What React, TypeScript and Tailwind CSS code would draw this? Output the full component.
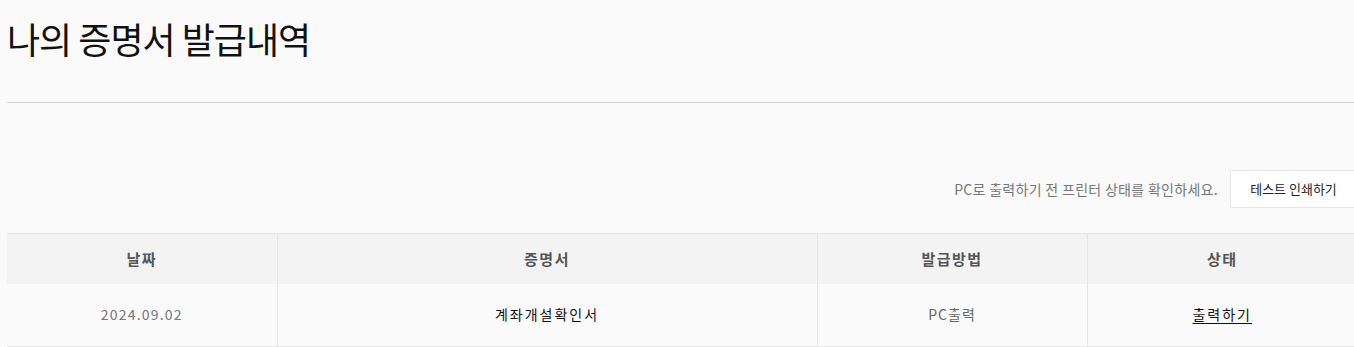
export default function App() {
  const font = { fontFamily: '"Noto Sans CJK KR", "Noto Sans", sans-serif' };
  return (
    <div className="min-h-[347px] w-full overflow-hidden bg-[#fafafa]" style={font}>
      <div className="ml-[7px] w-[1350px]">
        <h1 className="pt-[12px] text-[36px] leading-[52px] font-normal tracking-[-1px] text-[#111]">
          나의 증명서 발급내역
        </h1>
        <div className="mt-[38px] h-px bg-[#d4d4d4]" />
        <div className="mt-[67px] flex items-center justify-end gap-[12px]">
          <p className="text-[14px] tracking-[0.3px] text-[#777]">PC로 출력하기 전 프린터 상태를 확인하세요.</p>
          <button className="h-[38px] w-[127px] border border-[#e6e6e6] bg-white text-[13px] text-[#222]">
            테스트 인쇄하기
          </button>
        </div>
        <table className="mt-[25px] w-full table-fixed border-collapse text-[14px]">
          <colgroup>
            <col className="w-[270px]" />
            <col className="w-[540px]" />
            <col className="w-[270px]" />
            <col className="w-[270px]" />
          </colgroup>
          <thead>
            <tr className="h-[50px] border-t border-[#e6e6e6] bg-[#f3f3f3]">
              {["날짜", "증명서", "발급방법", "상태"].map((h, i) => (
                <th
                  key={h}
                  className={`text-[15px] font-bold tracking-[1.5px] text-[#555] ${i > 0 ? "border-l border-[#e6e6e6]" : ""}`}
                >
                  {h}
                </th>
              ))}
            </tr>
          </thead>
          <tbody>
            <tr className="h-[63px] border-b border-[#e6e6e6] bg-[#fafafa] text-center">
              <td className="tracking-[1.2px] text-[#777]">2024.09.02</td>
              <td className="border-l border-[#e6e6e6] tracking-[2px] text-[#111]">계좌개설확인서</td>
              <td className="border-l border-[#e6e6e6] tracking-[1px] text-[#666]">PC출력</td>
              <td className="border-l border-[#e6e6e6]">
                <a href="#" className="tracking-[2px] text-[#111] underline underline-offset-[3px]">
                  출력하기
                </a>
              </td>
            </tr>
          </tbody>
        </table>
      </div>
    </div>
  );
}
